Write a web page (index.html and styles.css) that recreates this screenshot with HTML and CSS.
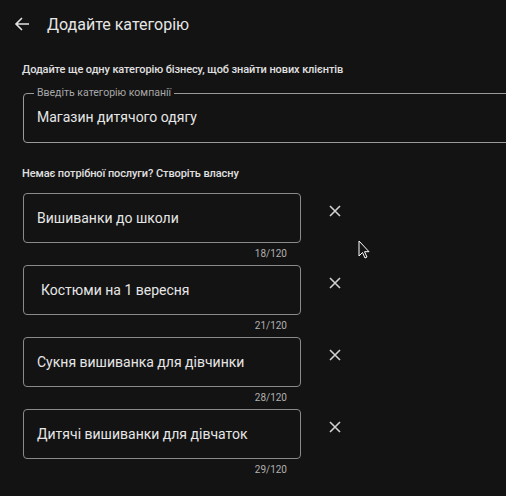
FILE: index.html
```html
<!DOCTYPE html>
<html lang="uk">
<head>
<meta charset="utf-8">
<link rel="stylesheet" href="styles.css">
</head>
<body>
<div class="page">
  <header class="header">
    <svg class="back" width="16" height="16" viewBox="0 0 16 16"><path d="M15 8H2M8 2L2 8l6 6" fill="none" stroke="#e3e3e3" stroke-width="1.6"/></svg>
    <h1 class="title">Додайте категорію</h1>
  </header>
  <div class="content">
    <p class="hint">Додайте ще одну категорію бізнесу, щоб знайти нових клієнтів</p>
    <fieldset class="field-main">
      <legend class="field-label">Введіть категорію компанії</legend>
      <div class="field-value">Магазин дитячого одягу</div>
    </fieldset>
    <p class="hint hint-second">Немає потрібної послуги? Створіть власну</p>
    <div class="list">
      <div class="item">
        <div class="box">Вишиванки до школи</div>
        <svg class="close" width="12" height="12" viewBox="0 0 12 12"><path d="M1 1l10 10M11 1L1 11" stroke="#d0d0d0" stroke-width="1.6"/></svg>
        <div class="count">18/120</div>
      </div>
      <div class="item">
        <div class="box box-indent">Костюми на 1 вересня</div>
        <svg class="close" width="12" height="12" viewBox="0 0 12 12"><path d="M1 1l10 10M11 1L1 11" stroke="#d0d0d0" stroke-width="1.6"/></svg>
        <div class="count">21/120</div>
      </div>
      <div class="item">
        <div class="box">Сукня вишиванка для дівчинки</div>
        <svg class="close" width="12" height="12" viewBox="0 0 12 12"><path d="M1 1l10 10M11 1L1 11" stroke="#d0d0d0" stroke-width="1.6"/></svg>
        <div class="count">28/120</div>
      </div>
      <div class="item">
        <div class="box">Дитячі вишиванки для дівчаток</div>
        <svg class="close" width="12" height="12" viewBox="0 0 12 12"><path d="M1 1l10 10M11 1L1 11" stroke="#d0d0d0" stroke-width="1.6"/></svg>
        <div class="count">29/120</div>
      </div>
    </div>
  </div>
  <svg class="cursor" width="13" height="20" viewBox="0 0 13 20"><path d="M1 1v15l3.5-3.5 2.5 5.5 2-1-2.5-5.3H11z" fill="#131313" stroke="#fff" stroke-width="1"/></svg>
</div>
</body>
</html>
```

FILE: styles.css
```css
html, body {
  margin: 0;
  padding: 0;
  background: #131313;
  overflow: hidden;
}
.page {
  position: relative;
  width: 506px;
  height: 496px;
  overflow: hidden;
  font-family: Roboto, "Noto Sans", sans-serif;
  color: #e3e3e3;
}
.header {
  height: 48px;
  display: flex;
  align-items: center;
  padding-left: 14px;
  gap: 17px;
}
.back {
  flex: none;
}
.title {
  margin: 0;
  font-size: 16px;
  font-weight: 400;
  color: #e6e6e6;
}
.content {
  padding-left: 22px;
}
.hint {
  margin: 14px 0 0;
  font-size: 11px;
  line-height: 16px;
  font-weight: 500;
  letter-spacing: -0.1px;
  color: #e0e0e0;
}
.field-main {
  margin: 9px 0 0 1px;
  padding: 0 0 0 13px;
  width: 520px;
  height: 56px;
  border: 1px solid #9a9a9a;
  border-radius: 4px;
  box-sizing: border-box;
}
.field-label {
  margin-left: -3px;
  padding: 0 3px;
  font-size: 10.5px;
  line-height: 12px;
  color: #a8a8a8;
}
.field-value {
  font-size: 14px;
  line-height: 20px;
  margin-top: 8px;
  color: #e6e6e6;
}
.hint-second {
  margin-top: 23px;
}
.list {
  margin-top: 11px;
  display: flex;
  flex-direction: column;
}
.item {
  display: grid;
  grid-template-columns: 278px 68px;
  grid-template-rows: 50px 22px;
  margin-left: 1px;
}
.box {
  box-sizing: border-box;
  height: 50px;
  border: 1px solid #8a8a8a;
  border-radius: 4px;
  padding-left: 13px;
  display: flex;
  align-items: center;
  font-size: 14px;
  color: #e6e6e6;
}
.box-indent {
  padding-left: 17px;
}
.close {
  justify-self: center;
  margin-top: 12px;
}
.count {
  grid-column: 1;
  text-align: right;
  padding-right: 14px;
  font-size: 10px;
  line-height: 22px;
  color: #b0b0b0;
}
.cursor {
  position: absolute;
  left: 358px;
  top: 240px;
}
```
